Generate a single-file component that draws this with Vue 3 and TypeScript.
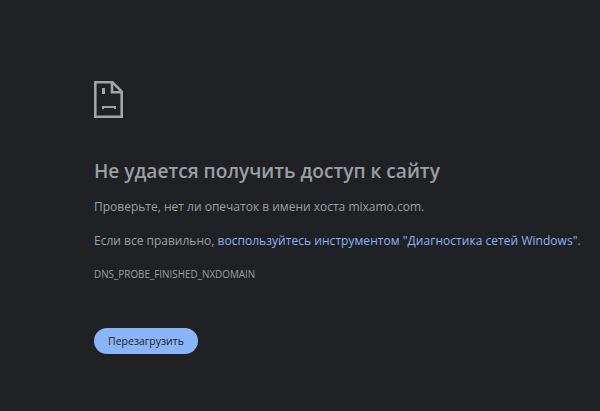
<script setup lang="ts">
const code: string = 'DNS_PROBE_FINISHED_NXDOMAIN'
</script>

<template>
  <main class="page">
    <svg class="icon" width="29" height="37" viewBox="0 0 29 37" aria-hidden="true">
      <path d="M1.3 1.3H18.5L27.7 10.5V35.7H1.3Z" fill="none" stroke="#a3a4a6" stroke-width="2.6" />
      <path d="M18 1.3V11.3H27.7" fill="none" stroke="#a3a4a6" stroke-width="2.6" />
      <rect x="8" y="7" width="3" height="6" fill="#a3a4a6" />
      <path d="M8 28V25H22V28H20V27H10V28Z" fill="#a3a4a6" />
    </svg>
    <h1 class="title">Не удается получить доступ к сайту</h1>
    <p class="line first">Проверьте, нет ли опечаток в имени хоста mixamo.com.</p>
    <p class="line second">
      Если все правильно, <a class="link">воспользуйтесь инструментом "Диагностика сетей Windows"</a>.
    </p>
    <div class="code">{{ code }}</div>
    <button class="reload" type="button">Перезагрузить</button>
  </main>
</template>

<style>
html, body { background: #202124; }
</style>

<style scoped>
.page {
  box-sizing: border-box;
  width: 600px;
  height: 411px;
  overflow: hidden;
  padding: 81px 0 0 94px;
  background: #202124;
  font-family: "Open Sans", "Noto Sans", sans-serif;
  color: #9aa0a6;
  display: flex;
  flex-direction: column;
  align-items: flex-start;
}
.icon { display: block; flex: none; }
.title {
  margin: 40px 0 0;
  font-size: 19.1px;
  line-height: 26px;
  font-weight: 600;
  color: #9aa0a6;
  white-space: nowrap;
}
.line {
  margin: 0;
  font-size: 12px;
  line-height: 16px;
  white-space: nowrap;
}
.first { margin-top: 15px; }
.second { margin-top: 18px; }
.link { color: #8ab4f8; letter-spacing: 0.04px; }
.code {
  margin-top: 19px;
  font-size: 9.9px;
  line-height: 12px;
  white-space: nowrap;
}
.reload {
  margin-top: 48px;
  width: 104px;
  height: 26px;
  border: 0;
  border-radius: 13px;
  background: #8ab4f8;
  color: #202124;
  font: inherit;
  font-size: 10.5px;
  padding: 0;
}
</style>
